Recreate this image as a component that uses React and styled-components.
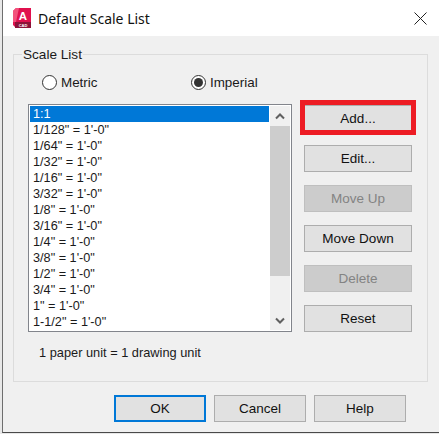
import React from 'react'
import styled, { createGlobalStyle } from 'styled-components'

const GlobalStyle = createGlobalStyle`
    html, body {
        margin: 0;
        padding: 0;
        background: #e8e8e8;
    }
    body {
        font-family: "Liberation Sans", Arial, sans-serif;
        font-size: 12.7px;
        color: #1a1a1a;
        overflow: hidden;
    }
`

const scales = [
    '1:1',
    `1/128" = 1'-0"`,
    `1/64" = 1'-0"`,
    `1/32" = 1'-0"`,
    `1/16" = 1'-0"`,
    `3/32" = 1'-0"`,
    `1/8" = 1'-0"`,
    `3/16" = 1'-0"`,
    `1/4" = 1'-0"`,
    `3/8" = 1'-0"`,
    `1/2" = 1'-0"`,
    `3/4" = 1'-0"`,
    `1" = 1'-0"`,
    `1-1/2" = 1'-0"`,
]

function AppIcon() {
    return (
        <svg width="19" height="20" viewBox="0 0 19 20">
            <path d="M3 0H18V19L17 20H3L0 17V3Z" fill="#e0104e" />
            <path d="M0 3L3 0H6L3 14H0Z" fill="#f2527c" />
            <rect x="2" y="14" width="16" height="6" fill="#8c1238" />
            <text x="10" y="11.5" fontFamily="Liberation Sans" fontSize="11.5" fontWeight="700" fill="#fff" textAnchor="middle">A</text>
            <text x="10" y="18.6" fontFamily="Liberation Sans" fontSize="4" fontWeight="700" fill="#fff" textAnchor="middle">CAD</text>
        </svg>
    )
}

function CloseIcon() {
    return (
        <svg width="13" height="13" viewBox="0 0 13 13">
            <path d="M0.5 0.5L12.5 12.5M12.5 0.5L0.5 12.5" stroke="#222" strokeWidth="1" fill="none" />
        </svg>
    )
}

function Chevron({ down }) {
    return (
        <svg width="10" height="7" viewBox="0 0 10 7">
            <path d={down ? 'M1 1.5L5 5.5L9 1.5' : 'M1 5.5L5 1.5L9 5.5'} stroke="#606060" strokeWidth="2" fill="none" />
        </svg>
    )
}

export default function App() {
    return (
        <Wrap>
            <GlobalStyle />
            <TitleBar>
                <AppIcon />
                <Title>Default Scale List</Title>
                <CloseButton><CloseIcon /></CloseButton>
            </TitleBar>
            <Body>
                <Group>
                    <Legend>Scale List</Legend>
                    <RadioRow>
                        <RadioLabel>
                            <Radio />
                            Metric
                        </RadioLabel>
                        <RadioLabel>
                            <Radio checked />
                            Imperial
                        </RadioLabel>
                    </RadioRow>
                    <ListRow>
                        <ListBox>
                            <Items>
                                {scales.map((s, i) => (
                                    <Item key={s} selected={i === 0}>{s}</Item>
                                ))}
                            </Items>
                            <ScrollBar>
                                <ScrollArrow><Chevron /></ScrollArrow>
                                <ScrollTrack><ScrollThumb /></ScrollTrack>
                                <ScrollArrow><Chevron down /></ScrollArrow>
                            </ScrollBar>
                        </ListBox>
                        <SideButtons>
                            <Highlighted>
                                <SideButton>Add...</SideButton>
                            </Highlighted>
                            <SideButton>Edit...</SideButton>
                            <SideButton disabled>Move Up</SideButton>
                            <SideButton>Move Down</SideButton>
                            <SideButton disabled>Delete</SideButton>
                            <SideButton>Reset</SideButton>
                        </SideButtons>
                    </ListRow>
                    <UnitNote>1 paper unit = 1 drawing unit</UnitNote>
                </Group>
                <Footer>
                    <FooterButton primary>OK</FooterButton>
                    <FooterButton>Cancel</FooterButton>
                    <FooterButton>Help</FooterButton>
                </Footer>
            </Body>
        </Wrap>
    )
}

const Wrap = styled.div`
    width: 436px;
    height: 432px;
    margin-left: 2px;
    border-left: 1px solid #6e6e6e;
    border-bottom: 1px solid #4a4a4a;
    display: flex;
    flex-direction: column;
    overflow: hidden;
`

const TitleBar = styled.div`
    height: 36px;
    flex-shrink: 0;
    background: #fff;
    display: flex;
    align-items: center;
    padding: 0 12px 0 10px;
    box-sizing: border-box;
`

const Title = styled.div`
    margin-left: 6px;
    font-family: "Noto Sans", sans-serif;
    font-size: 14px;
    color: #111;
`

const CloseButton = styled.div`
    margin-left: auto;
    display: flex;
`

const Body = styled.div`
    flex: 1;
    background: #f0f0f0;
    padding: 9px 11px 0 10px;
`

const Group = styled.fieldset`
    margin: 0;
    padding: 11px 15px 0 14px;
    height: 337px;
    box-sizing: border-box;
    border: 1.5px solid #dcdcdc;
    min-width: 0;
`

const Legend = styled.legend`
    margin-left: -6px;
    padding: 2px 1px 0;
    line-height: 16px;
    font-size: 13.6px;
`

const RadioRow = styled.div`
    display: flex;
    padding-left: 14px;
    height: 30px;
    align-items: flex-start;
`

const RadioLabel = styled.label`
    display: flex;
    align-items: center;
    gap: 4px;
    width: 149px;
    height: 16px;
    font-size: 13.4px;
`

const Radio = styled.span`
    width: 15px;
    height: 15px;
    box-sizing: border-box;
    border-radius: 50%;
    border: 1px solid #333;
    background: #fff;
    display: flex;
    align-items: center;
    justify-content: center;
    &::after {
        content: "";
        display: ${props => (props.checked ? 'block' : 'none')};
        width: 9px;
        height: 9px;
        border-radius: 50%;
        background: #333;
    }
`

const ListRow = styled.div`
    display: flex;
    gap: 12px;
    align-items: flex-start;
`

const ListBox = styled.div`
    width: 264px;
    height: 228px;
    box-sizing: border-box;
    border: 1px solid #82858c;
    background: #fff;
    padding: 1px 1px 0 1px;
    display: flex;
`

const Items = styled.div`
    flex: 1;
    min-width: 0;
`

const Item = styled.div`
    height: 16px;
    line-height: 16px;
    padding-left: 3px;
    color: ${props => (props.selected ? '#fff' : '#1a1a1a')};
    background: ${props => (props.selected ? '#0078d7' : 'transparent')};
`

const ScrollBar = styled.div`
    width: 20px;
    height: 224px;
    margin-left: 1px;
    background: #f0f0f0;
    display: flex;
    flex-direction: column;
`

const ScrollArrow = styled.div`
    height: 20px;
    flex-shrink: 0;
    display: flex;
    align-items: center;
    justify-content: center;
`

const ScrollTrack = styled.div`
    flex: 1;
`

const ScrollThumb = styled.div`
    height: 150px;
    background: #cdcdcd;
`

const SideButtons = styled.div`
    width: 108px;
    padding-top: 1px;
    display: flex;
    flex-direction: column;
    gap: 13px;
`

const SideButton = styled.button`
    display: block;
    width: 108px;
    height: 27px;
    padding: 0;
    box-sizing: border-box;
    border: 1px solid ${props => (props.disabled ? '#bfbfbf' : '#adadad')};
    background: ${props => (props.disabled ? '#cccccc' : '#e1e1e1')};
    color: ${props => (props.disabled ? '#838383' : '#111')};
    font-family: inherit;
    font-size: 13.5px;
`

const Highlighted = styled.div`
    position: relative;
    &::after {
        content: "";
        position: absolute;
        inset: -5px -4px -3px -4px;
        border: 5px solid #ed1c24;
        pointer-events: none;
    }
`

const UnitNote = styled.div`
    margin: 13px 0 0 11px;
    line-height: 16px;
    font-size: 12.8px;
`

const Footer = styled.div`
    display: flex;
    gap: 8px;
    margin-top: 13px;
    padding-left: 101px;
`

const FooterButton = styled.button`
    width: 92px;
    height: 27px;
    padding: 0;
    box-sizing: border-box;
    border: ${props => (props.primary ? '2px solid #0078d7' : '1px solid #adadad')};
    background: #e1e1e1;
    color: #111;
    font-family: inherit;
    font-size: 13.5px;
`
